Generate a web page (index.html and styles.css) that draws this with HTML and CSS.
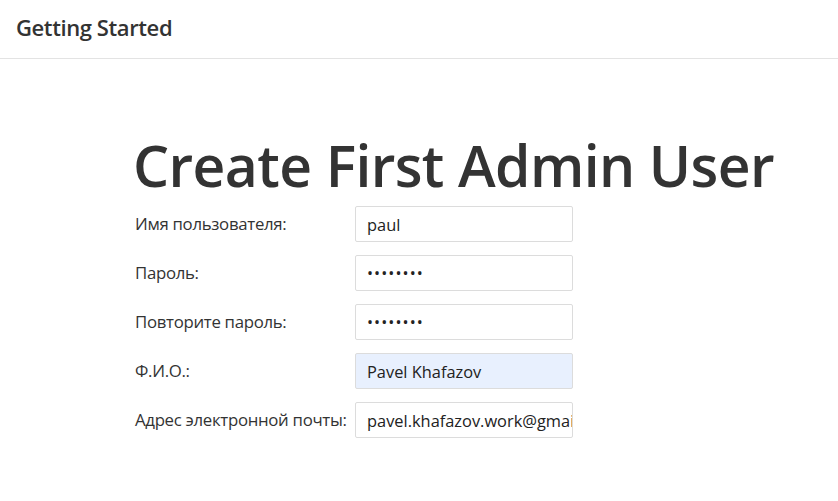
FILE: index.html
```html
<!DOCTYPE html>
<html lang="ru">
<head>
<meta charset="utf-8">
<title>Getting Started</title>
<link rel="stylesheet" href="styles.css">
</head>
<body>
<header class="topbar">
  <h1 class="topbar-title">Getting Started</h1>
</header>
<main class="content">
  <h2 class="page-title">Create First Admin User</h2>
  <form class="admin-form">
    <div class="row">
      <label class="label">Имя пользователя:</label>
      <div class="field">paul</div>
    </div>
    <div class="row">
      <label class="label">Пароль:</label>
      <div class="field field-pass">••••••••</div>
    </div>
    <div class="row">
      <label class="label">Повторите пароль:</label>
      <div class="field field-pass">••••••••</div>
    </div>
    <div class="row">
      <label class="label">Ф.И.О.:</label>
      <div class="field field-autofill">Pavel Khafazov</div>
    </div>
    <div class="row">
      <label class="label">Адрес электронной почты:</label>
      <div class="field">pavel.khafazov.work@gmail.com</div>
    </div>
  </form>
</main>
</body>
</html>
```
FILE: styles.css
```css
html, body {
  margin: 0;
  padding: 0;
  background: #fff;
}
body {
  font-family: "Open Sans", "Noto Sans", sans-serif;
  color: #333;
  width: 838px;
  height: 501px;
  overflow: hidden;
}
.topbar {
  height: 59px;
  border-bottom: 1px solid #e3e3e3;
  display: flex;
  align-items: center;
  padding: 0 0 4px 16px;
  box-sizing: border-box;
}
.topbar-title {
  margin: 0;
  font-size: 22px;
  font-weight: 600;
  color: #333;
  letter-spacing: -0.4px;
}
.content {
  padding: 0 0 0 133px;
}
.page-title {
  margin: 71px 0 0 0;
  font-size: 57px;
  font-weight: 600;
  line-height: 70px;
  letter-spacing: -0.6px;
  color: #333;
}
.admin-form {
  display: flex;
  flex-direction: column;
  gap: 13px;
  margin-top: 6px;
  margin-left: 2px;
}
.row {
  display: flex;
  align-items: center;
  height: 36px;
}
.label {
  width: 220px;
  font-size: 16.8px;
  color: #333;
  letter-spacing: -0.3px;
  white-space: nowrap;
  padding-bottom: 1px;
}
.field {
  width: 218px;
  height: 36px;
  box-sizing: border-box;
  border: 1px solid #dcdcdc;
  border-radius: 2px;
  padding: 0 11px;
  display: flex;
  align-items: center;
  font-size: 16.4px;
  color: #222;
  white-space: nowrap;
  overflow: hidden;
}
.field-pass {
  font-size: 16px;
  letter-spacing: 1.1px;
}
.field-autofill {
  background: #e8f0fe;
}
```
